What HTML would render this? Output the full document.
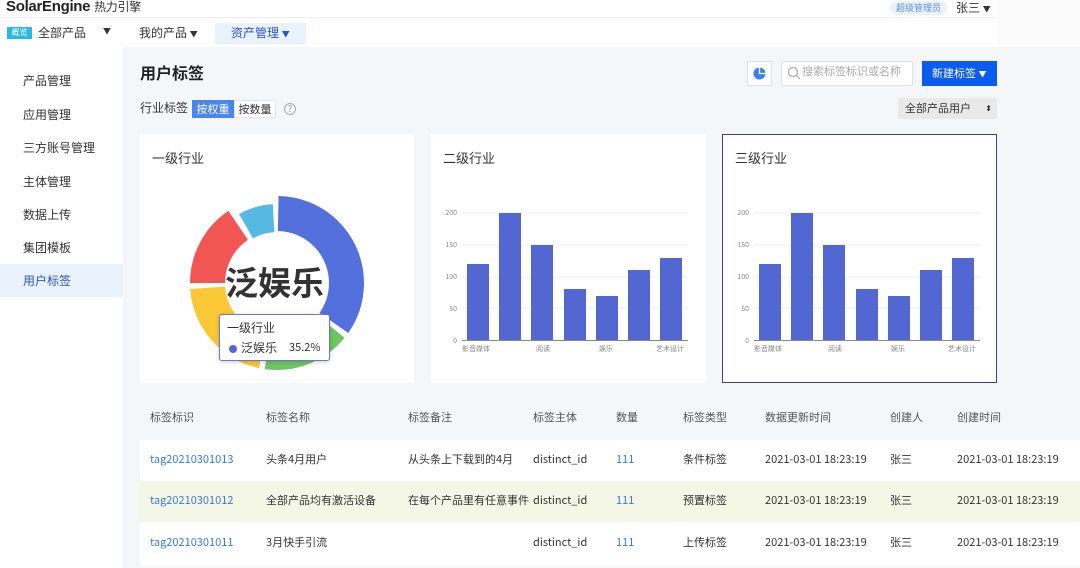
<!DOCTYPE html>
<html><head><meta charset="utf-8"><style>
*{margin:0;padding:0;box-sizing:border-box}
body{width:1080px;height:568px;overflow:hidden;background:#f5f6f8;font-family:"Noto Sans CJK SC","Liberation Sans",sans-serif;color:#333;position:relative;line-height:1.25}
.a{position:absolute;white-space:nowrap}
.top{left:0;top:0;width:997px;height:47px;background:#fff}
.side{left:0;top:47px;width:123px;height:521px;background:#fff}
.side div{position:absolute;left:23px;font-size:12px;color:#333}
.card{background:#fff}
.tb{font-size:11px;color:#333}
</style></head><body>
<div class="a top"></div>
<div class="a" style="left:997px;top:0;width:83px;height:47px;background:#fbfbfc"></div>
<div class="a" style="left:6px;top:-2px;font-size:15px;font-weight:bold;color:#222;letter-spacing:-0.3px;font-family:'Liberation Sans','Noto Sans CJK SC',sans-serif">SolarEngine <span style="font-weight:normal;font-size:12px;color:#333;font-family:'Noto Sans CJK SC',sans-serif">热力引擎</span></div>
<div class="a" style="left:0;top:17px;width:997px;height:1px;background:#f0f0f0"></div>
<div class="a" style="left:7px;top:27px;width:25px;height:12px;background:#2bb8e8;color:#fff;font-size:8px;text-align:center;line-height:12px">概览</div>
<div class="a" style="left:38px;top:25px;font-size:12px">全部产品</div>
<div class="a" style="left:103px;top:27px;font-size:8px">▼</div>
<div class="a" style="left:139px;top:25px;font-size:12px">我的产品 <span style="font-size:8px">▼</span></div>
<div class="a" style="left:215px;top:23px;width:91px;height:21px;background:#eaf2fd"></div>
<div class="a" style="left:231px;top:25px;font-size:12px;color:#2856c8">资产管理 <span style="font-size:8px">▼</span></div>
<div class="a" style="left:890px;top:1px;width:57px;height:14px;background:#eaf2fd;border-radius:7px;font-size:9px;color:#5b8ee8;text-align:center;line-height:14px">超级管理员</div>
<div class="a" style="left:956px;top:0px;font-size:12px">张三 <span style="font-size:8px">▼</span></div>

<div class="a side">
<div style="top:26px">产品管理</div>
<div style="top:60px">应用管理</div>
<div style="top:93px">三方账号管理</div>
<div style="top:127px">主体管理</div>
<div style="top:160px">数据上传</div>
<div style="top:193px">集团模板</div>
<div style="top:217px;left:0;width:123px;height:33px;background:#eaf2fd"></div>
<div style="top:226px;color:#2856c8">用户标签</div>
</div>

<div class="a" style="left:140px;top:62px;font-size:16px;font-weight:bold;color:#222">用户标签</div>
<div class="a" style="left:140px;top:100px;font-size:12px">行业标签</div>
<div class="a" style="left:192px;top:100px;width:42px;height:18px;background:#4a86f0;color:#fff;font-size:11px;line-height:18px;text-align:center">按权重</div>
<div class="a" style="left:234px;top:100px;width:42px;height:18px;background:#fff;border:1px solid #e4e4e4;font-size:11px;line-height:16px;text-align:center">按数量</div>
<div class="a" style="left:284px;top:103px;width:12px;height:12px;border:1px solid #aaa;border-radius:50%;font-size:9px;color:#999;text-align:center;line-height:10px">?</div>

<div class="a" style="left:747px;top:61px;width:25px;height:25px;background:#fff;border:1px solid #e0e0e0"></div>
<svg class="a" style="left:752px;top:66px" width="15" height="15"><circle cx="7.5" cy="7.5" r="6" fill="#3f7fe8"/><path d="M7.5 1.5 L7.5 7.5 L13.5 7.5" fill="none" stroke="#fff" stroke-width="1.3"/></svg>
<div class="a" style="left:781px;top:61px;width:132px;height:25px;background:#fff;border:1px solid #e0e0e0;border-radius:2px"></div>
<svg class="a" style="left:787px;top:66px" width="14" height="14"><circle cx="6" cy="6" r="4.5" fill="none" stroke="#aaa" stroke-width="1.2"/><path d="M9.3 9.3 L13 13" stroke="#aaa" stroke-width="1.2"/></svg>
<div class="a" style="left:802px;top:65px;font-size:11px;color:#aaa">搜索标签标识或名称</div>
<div class="a" style="left:922px;top:61px;width:75px;height:25px;background:#0a5cf0;color:#fff;font-size:11px;line-height:25px;padding-left:10px">新建标签 <span style="font-size:8px">▼</span></div>
<div class="a" style="left:898px;top:98px;width:99px;height:21px;background:#e9e9e9;border-radius:2px;font-size:11px;line-height:21px;padding-left:7px">全部产品用户<span style="position:absolute;right:5px;font-size:8px;top:0">⬍</span></div>

<div class="a card" style="left:140px;top:134px;width:274px;height:249px"></div>
<div class="a card" style="left:431px;top:134px;width:275px;height:249px"></div>
<div class="a card" style="left:722px;top:134px;width:275px;height:249px;border:1px solid #3d3da8"></div>
<div class="a" style="left:152px;top:150px;font-size:13px">一级行业</div>
<div class="a" style="left:443px;top:150px;font-size:13px">二级行业</div>
<div class="a" style="left:735px;top:150px;font-size:13px">三级行业</div>

<svg class="a" style="left:0;top:0" width="1080" height="568">
<g fill="none" stroke-width="35">
<circle cx="277" cy="283" r="69.5" stroke="#5470dc" stroke-dasharray="150.4 400" transform="rotate(-89 277 283)"/>
<circle cx="277" cy="283" r="69.5" stroke="#6fc563" stroke-dasharray="71.6 400" transform="rotate(39 277 283)"/>
<circle cx="277" cy="283" r="69.5" stroke="#fac735" stroke-dasharray="89.8 400" transform="rotate(102 277 283)"/>
<circle cx="277" cy="283" r="69.5" stroke="#f15655" stroke-dasharray="67.9 400" transform="rotate(180 277 283)"/>
<circle cx="277" cy="280" r="62" stroke="#55b9e2" stroke-width="28" stroke-dasharray="29 400" transform="rotate(240 277 280)"/>
</g>
<g id="b1" font-size="7" fill="#888" font-family="Noto Sans CJK SC, Liberation Sans, sans-serif">
<g stroke="#eee" stroke-width="1"><line x1="462" y1="213" x2="688" y2="213"/><line x1="462" y1="245" x2="688" y2="245"/><line x1="462" y1="277" x2="688" y2="277"/><line x1="462" y1="308" x2="688" y2="308"/></g>
<line x1="462" y1="340.5" x2="688" y2="340.5" stroke="#888"/>
<text x="457" y="215" text-anchor="end">200</text><text x="457" y="247" text-anchor="end">150</text><text x="457" y="279" text-anchor="end">100</text><text x="457" y="311" text-anchor="end">50</text><text x="457" y="343" text-anchor="end">0</text>
<g fill="#5267d1"><rect x="467" y="264" width="22" height="76"/><rect x="499" y="213" width="22" height="127"/><rect x="531" y="245" width="22" height="95"/><rect x="564" y="289" width="22" height="51"/><rect x="596" y="296" width="22" height="44"/><rect x="628" y="270" width="22" height="70"/><rect x="660" y="258" width="22" height="82"/></g>
<text x="462" y="351">影音媒体</text><text x="536" y="351">阅读</text><text x="599" y="351">娱乐</text><text x="656" y="351">艺术设计</text>
</g>
<use href="#b1" x="292"/>
</svg>
<div class="a" style="left:225px;top:261px;font-size:33px;font-weight:bold;color:#333">泛娱乐</div>
<div class="a" style="left:219px;top:314px;width:111px;height:47px;background:#fff;border:1px solid #6b79c8;border-radius:3px;box-shadow:0 1px 4px rgba(0,0,0,.2)"></div>
<div class="a" style="left:227px;top:320px;font-size:12px">一级行业</div>
<div class="a" style="left:229px;top:345px;width:8px;height:8px;border-radius:50%;background:#5267d1"></div>
<div class="a" style="left:241px;top:340px;font-size:12px">泛娱乐</div>
<div class="a" style="left:289px;top:341px;font-size:11px">35.2%</div>

<div class="a" style="left:140px;top:440px;width:940px;height:126px;background:#fff"></div>
<div class="a" style="left:140px;top:481px;width:940px;height:41px;background:#f4f6e6"></div>
<div class="a tb" style="left:150px;top:411px;color:#555">标签标识</div>
<div class="a tb" style="left:266px;top:411px;color:#555">标签名称</div>
<div class="a tb" style="left:408px;top:411px;color:#555">标签备注</div>
<div class="a tb" style="left:533px;top:411px;color:#555">标签主体</div>
<div class="a tb" style="left:616px;top:411px;color:#555">数量</div>
<div class="a tb" style="left:683px;top:411px;color:#555">标签类型</div>
<div class="a tb" style="left:765px;top:411px;color:#555">数据更新时间</div>
<div class="a tb" style="left:890px;top:411px;color:#555">创建人</div>
<div class="a tb" style="left:957px;top:411px;color:#555">创建时间</div>

<div class="a tb" style="left:150px;top:453px;color:#3a7ad8">tag20210301013</div>
<div class="a tb" style="left:266px;top:453px">头条4月用户</div>
<div class="a tb" style="left:408px;top:453px">从头条上下载到的4月</div>
<div class="a tb" style="left:533px;top:453px">distinct_id</div>
<div class="a tb" style="left:616px;top:453px;color:#3a7ad8">111</div>
<div class="a tb" style="left:683px;top:453px">条件标签</div>
<div class="a tb" style="left:765px;top:453px">2021-03-01 18:23:19</div>
<div class="a tb" style="left:890px;top:453px">张三</div>
<div class="a tb" style="left:957px;top:453px">2021-03-01 18:23:19</div>

<div class="a tb" style="left:150px;top:494px;color:#3a7ad8">tag20210301012</div>
<div class="a tb" style="left:266px;top:494px">全部产品均有激活设备</div>
<div class="a tb" style="left:408px;top:494px">在每个产品里有任意事件</div>
<div class="a tb" style="left:533px;top:494px">distinct_id</div>
<div class="a tb" style="left:616px;top:494px;color:#3a7ad8">111</div>
<div class="a tb" style="left:683px;top:494px">预置标签</div>
<div class="a tb" style="left:765px;top:494px">2021-03-01 18:23:19</div>
<div class="a tb" style="left:890px;top:494px">张三</div>
<div class="a tb" style="left:957px;top:494px">2021-03-01 18:23:19</div>

<div class="a tb" style="left:150px;top:536px;color:#3a7ad8">tag20210301011</div>
<div class="a tb" style="left:266px;top:536px">3月快手引流</div>
<div class="a tb" style="left:533px;top:536px">distinct_id</div>
<div class="a tb" style="left:616px;top:536px;color:#3a7ad8">111</div>
<div class="a tb" style="left:683px;top:536px">上传标签</div>
<div class="a tb" style="left:765px;top:536px">2021-03-01 18:23:19</div>
<div class="a tb" style="left:890px;top:536px">张三</div>
<div class="a tb" style="left:957px;top:536px">2021-03-01 18:23:19</div>
</body></html>
